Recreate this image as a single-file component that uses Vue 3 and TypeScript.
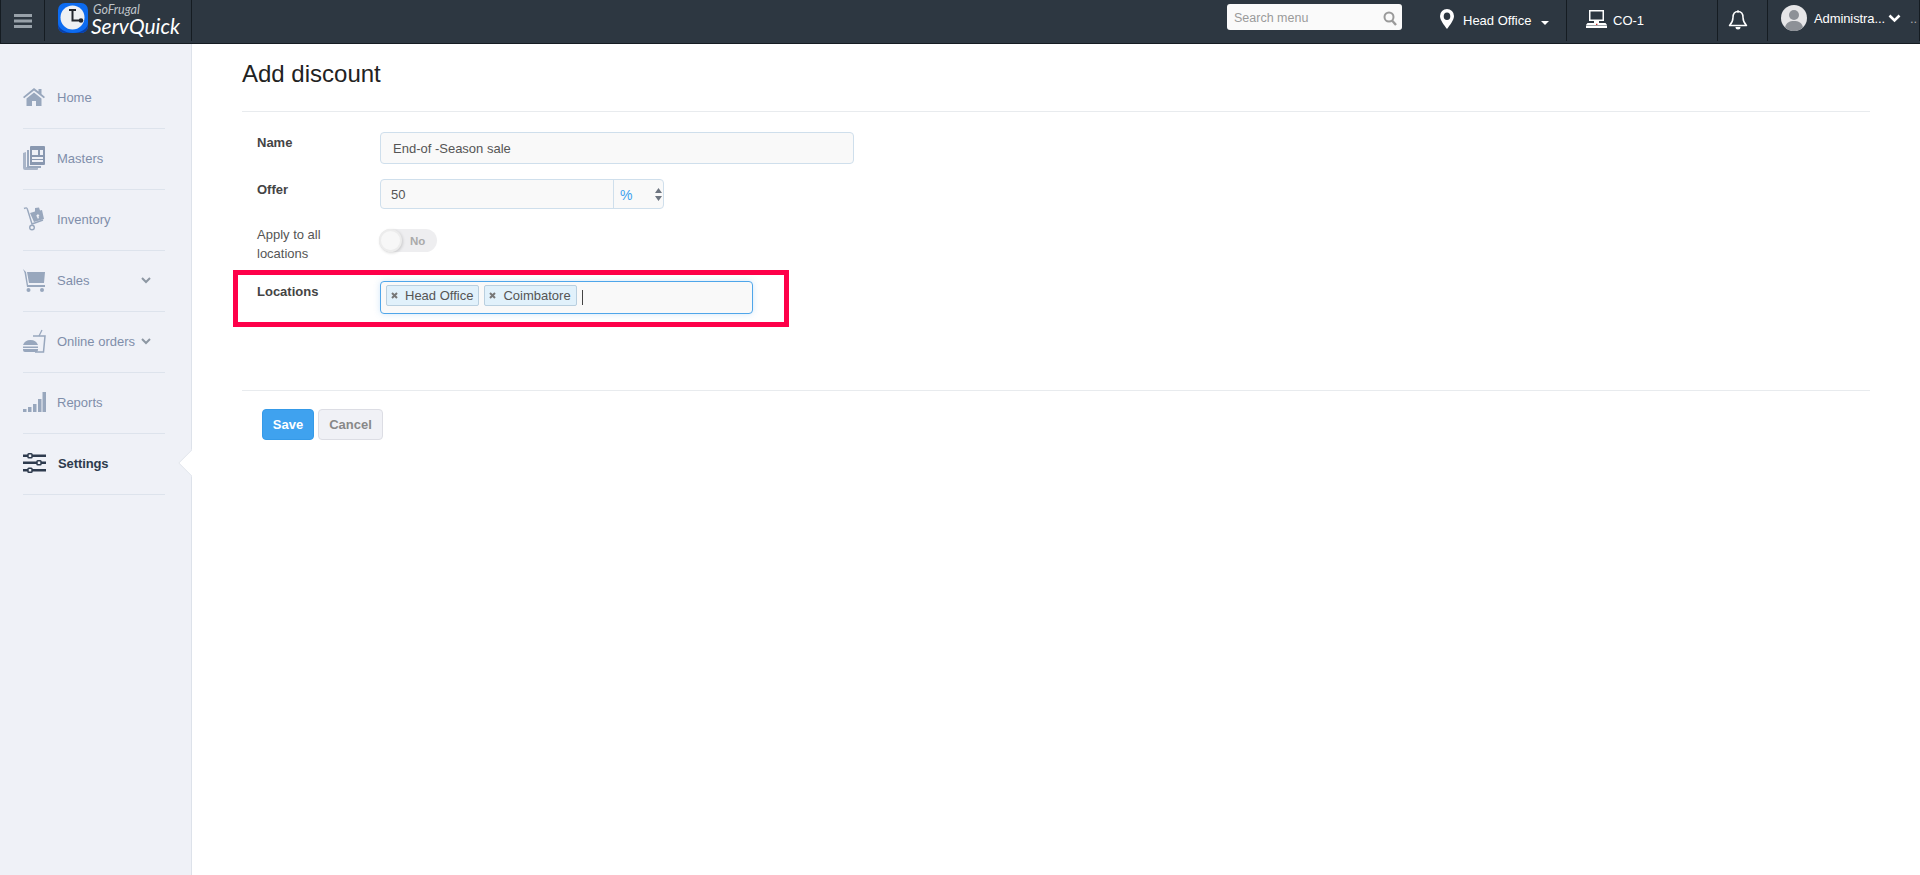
<script setup lang="ts">
interface NavItem { label: string; icon: string; chevron?: boolean; active?: boolean }
const nav: NavItem[] = [
  { label: 'Home', icon: 'home' },
  { label: 'Masters', icon: 'masters' },
  { label: 'Inventory', icon: 'inventory' },
  { label: 'Sales', icon: 'sales', chevron: true },
  { label: 'Online orders', icon: 'online', chevron: true },
  { label: 'Reports', icon: 'reports' },
  { label: 'Settings', icon: 'settings', active: true },
]
const tags = ['Head Office', 'Coimbatore']
</script>

<template>
  <div class="page">
    <header class="topbar">
      <div class="tb-cell burger-cell">
        <svg width="18" height="14" viewBox="0 0 18 14"><path d="M0 0h18v3H0zM0 5.500h18v3H0zM0 11h18v3H0z" fill="#98a1a9"/></svg>
      </div>
      <div class="tb-cell logo-cell">
        <svg class="logo-icon" width="30" height="30" viewBox="0 0 30 30">
          <rect width="30" height="30" rx="7" fill="#0c6bf0"/>
          <path d="M0 20v3a7 7 0 0 0 7 7h16a7 7 0 0 0 7-7v-3a15 10 0 0 1-30 0z" fill="#0a3fa8"/>
          <circle cx="14.500" cy="14.500" r="12" fill="#eef0f3"/>
          <path d="M11 6h7v2h-2.500v8.500H23v2h-9.500V8H11z" fill="#23272e"/>
          <circle cx="23" cy="17.500" r="2.300" fill="#23272e"/>
        </svg>
        <div class="logo-text">
          <span class="logo-top">GoFrugal</span>
          <span class="logo-main">ServQuick</span>
        </div>
      </div>
      <div class="tb-spacer"></div>
      <div class="search">
        <span>Search menu</span>
        <svg width="14" height="15" viewBox="0 0 14 15"><circle cx="6" cy="6" r="4.500" fill="none" stroke="#9a9a9a" stroke-width="2"/><path d="M9 9.500l4 4.500" stroke="#9a9a9a" stroke-width="2.400"/></svg>
      </div>
      <div class="tb-cell loc-cell">
        <svg width="14" height="20" viewBox="0 0 14 20"><path fill-rule="evenodd" d="M7 0a7 7 0 0 1 7 7c0 4-4 9-7 13-3-4-7-9-7-13a7 7 0 0 1 7-7zm0 3.500a3.300 3.800 0 1 0 0 7.600 3.300 3.800 0 0 0 0-7.600z" fill="#fff"/></svg>
        <span>Head Office</span>
        <i class="caret"></i>
      </div>
      <div class="tb-cell co-cell">
        <svg width="21" height="18" viewBox="0 0 21 18">
          <path fill-rule="evenodd" d="M3 0h15v11H3zM4.500 1.500v8h12v-8z" fill="#fff"/>
          <path d="M8 11h5v2H8z" fill="#fff"/>
          <path d="M1.500 13h18l1.500 2v3H0v-3z" fill="#fff"/>
          <path d="M0 15.400h21v.6H0z" fill="#5b6670"/>
          <path d="M10 13.800h1.400v1.200H10z" fill="#c8322f"/>
        </svg>
        <span>CO-1</span>
      </div>
      <div class="tb-cell bell-cell">
        <svg width="20" height="21" viewBox="0 0 20 21"><path d="M10 1.500c-3.500 0-5 2.500-5 6 0 4-1.500 6-3.500 8h17c-2-2-3.500-4-3.500-8 0-3.500-1.500-6-5-6z" fill="none" stroke="#fff" stroke-width="1.500" stroke-linejoin="round"/><path d="M7.500 17h5a2.500 2.500 0 0 1-5 0zM9 .5h2v2H9z" fill="#fff"/></svg>
      </div>
      <div class="tb-cell user-cell">
        <svg width="26" height="26" viewBox="0 0 26 26"><circle cx="13" cy="13" r="13" fill="#e6e6e8"/><circle cx="13" cy="10" r="5" fill="#8d9197"/><path d="M4 22.500c1-5 4.500-6.500 9-6.500s8 1.500 9 6.500a13 13 0 0 1-18 0z" fill="#8d9197"/></svg>
        <span>Administra...</span>
        <svg width="13" height="9" viewBox="0 0 13 9"><path d="M1.500 1.500l5 5 5-5" fill="none" stroke="#fff" stroke-width="2.600"/></svg>
        <span class="dots">..</span>
      </div>
    </header>

    <div class="body">
      <aside class="sidebar">
        <nav>
          <a v-for="item in nav" :key="item.label" class="nav-item" :class="{ active: item.active }">
            <span class="nav-icon">
              <svg v-if="item.icon === 'home'" width="22" height="18" viewBox="0 0 22 18"><path d="M11 0l4.500 3.600V1h3v5l3.500 3-1.200 1.300L11 2.600 1.200 10.300 0 9z" fill="#98a7bd"/><path d="M3.500 10.500L11 4.600l7.500 5.900V18H13v-5H9v5H3.500z" fill="#98a7bd"/></svg>
              <svg v-else-if="item.icon === 'masters'" width="22" height="24" viewBox="0 0 22 24"><path d="M0 7l3-1v15h12v2a1 1 0 0 1-1 1H2a2 2 0 0 1-2-2z" fill="#a9b5c8"/><path d="M4 4h2v16h12v2H5a1 1 0 0 1-1-1z" fill="#98a7bd"/><path fill-rule="evenodd" d="M7 1a1 1 0 0 1 1-1h13a1 1 0 0 1 1 1v17a1 1 0 0 1-1 1H7zm2 3v5h6V4zm8 0v5h3V4zM9 11v2h11v-2zm0 3v2h11v-2z" fill="#8998b0"/></svg>
              <svg v-else-if="item.icon === 'inventory'" width="22" height="24" viewBox="0 0 22 24"><path d="M1 1.500c2-1 3-1 3.500 1L9 17l11-4" fill="none" stroke="#98a7bd" stroke-width="1.400"/><path d="M7 6l5-1.500V1l4-.5 1 3 2-.5 2 9-10 3z" fill="#98a7bd"/><path d="M13 9l2-2 1.500 2-1 .2.500 2-1.500.4-.5-2z" fill="#eff1f7"/><circle cx="9" cy="20.500" r="2.300" fill="none" stroke="#98a7bd" stroke-width="1.400"/></svg>
              <svg v-else-if="item.icon === 'sales'" width="22" height="23" viewBox="0 0 22 23"><path d="M0 0l3 3 2 13h17v2H4L1.500 3.500z" fill="#98a7bd"/><path d="M4 3h18l-1 11H6z" fill="#98a7bd"/><circle cx="5.500" cy="21" r="2" fill="#98a7bd"/><circle cx="19" cy="21" r="2" fill="#98a7bd"/></svg>
              <svg v-else-if="item.icon === 'online'" width="23" height="24" viewBox="0 0 23 24"><path d="M10 7h12l-1.500 16H12" fill="none" stroke="#98a7bd" stroke-width="1.500"/><path d="M16 7l3-6" stroke="#98a7bd" stroke-width="1.200"/><path d="M0 16a8 7.500 0 0 1 15 0zM0 17.500h15V19H0zM0 20h15v1a2 2 0 0 1-2 2H2a2 2 0 0 1-2-2z" fill="#98a7bd"/></svg>
              <svg v-else-if="item.icon === 'reports'" width="23" height="20" viewBox="0 0 23 20"><path d="M0 17h3.500v3H0zM5 15h3.500v5H5zM10 12h3.500v8H10zM15 7h3.500v13H15zM19.500 0H23v20h-3.500z" fill="#98a7bd"/></svg>
              <svg v-else width="23" height="20" viewBox="0 0 23 20"><g fill="#2e3b4e"><path d="M0 1.500h23v2.400H0zM0 8.500h23v2.400H0zM0 16h23v2.400H0z"/></g><g fill="#eff1f7" stroke="#2e3b4e" stroke-width="1.500"><rect x="5" y=".8" width="4" height="4" rx=".8"/><rect x="14" y="7.800" width="4" height="4" rx=".8"/><rect x="5" y="15.200" width="4" height="4" rx=".8"/></g></svg>
            </span>
            <span class="nav-label">{{ item.label }}</span>
            <svg v-if="item.chevron" class="chev" width="10" height="7" viewBox="0 0 10 7"><path d="M1 1l4 4 4-4" fill="none" stroke="#8d97a3" stroke-width="2"/></svg>
          </a>
        </nav>
        <i class="notch"></i>
      </aside>

      <main class="main">
        <h1>Add discount</h1>
        <form class="form" @submit.prevent>
          <div class="row row-name">
            <label class="lbl">Name</label>
            <div class="input input-name">End-of -Season sale</div>
          </div>
          <div class="row row-offer">
            <label class="lbl">Offer</label>
            <div class="input input-offer">
              <span class="offer-val">50</span>
              <span class="offer-unit">%
                <svg width="7" height="13" viewBox="0 0 7 13"><path d="M3.500 0L7 5H0zM0 8h7l-3.500 5z" fill="#6e7580"/></svg>
              </span>
            </div>
          </div>
          <div class="row row-apply">
            <label class="lbl lbl-plain">Apply to all<br />locations</label>
            <div class="toggle"><i class="knob"></i><span>No</span></div>
          </div>
          <div class="row row-loc">
            <label class="lbl">Locations</label>
            <div class="input input-loc">
              <span v-for="t in tags" :key="t" class="tag">
                <svg width="7" height="7" viewBox="0 0 7 7"><path d="M1 1l5 5M6 1L1 6" stroke="#777" stroke-width="2"/></svg>
                {{ t }}
              </span>
              <i class="cursor"></i>
            </div>
            <div class="annotation"></div>
          </div>
        </form>
        <div class="actions">
          <button type="button" class="btn save">Save</button>
          <button type="button" class="btn cancel">Cancel</button>
        </div>
      </main>
    </div>
  </div>
</template>

<style>
html, body { margin: 0; background: #fff; overflow: hidden; }
</style>

<style scoped>
.page { width: 1920px; height: 875px; display: flex; flex-direction: column; font-family: "Liberation Sans", Arial, sans-serif; font-size: 13px; color: #555; }
.topbar { height: 43px; flex: none; display: flex; align-items: stretch; background: #2d3741; border-bottom: 1px solid #151c22; border-left: 1px solid #151c22; color: #fff; }
.tb-cell { display: flex; align-items: center; height: 41px; box-sizing: border-box; }
.burger-cell { width: 44px; border-right: 1px solid #151c22; padding-left: 13px; }
.logo-cell { width: 147px; border-right: 1px solid #151c22; padding-left: 13px; gap: 3px; }
.logo-icon { flex: none; margin-top: 3px; align-self: flex-start; }
.logo-text { display: flex; flex-direction: column; font-family: Lato, sans-serif; font-style: italic; line-height: 1; margin-top: -3px; }
.logo-top { font-size: 12.500px; color: #bfc4c9; margin-left: 2px; line-height: 13px; }
.logo-main { font-size: 21px; font-weight: 400; color: #fff; line-height: 20px; }
.tb-spacer { flex: 1; }
.search { width: 175px; height: 26px; margin-top: 4px; background: #fafafa; border-radius: 3px; display: flex; align-items: center; justify-content: space-between; padding: 2px 5px 0 7px; box-sizing: border-box; color: #9a9a9a; font-size: 12.500px; }
.loc-cell { width: 165px; padding-left: 38px; box-sizing: border-box; gap: 9px; font-size: 13px; border-right: 1px solid #151c22; }
.loc-cell svg { margin-top: -4px; }
.caret { width: 0; height: 0; border: 4px solid transparent; border-top-color: #fff; border-bottom: 0; margin-left: 1px; margin-top: 4px; }
.co-cell { width: 151px; padding-left: 19px; gap: 6px; border-right: 1px solid #151c22; }
.co-cell svg { margin-top: -4px; }
.co-cell span { margin-top: -1px; }
.bell-cell { width: 50px; padding-left: 10px; border-right: 1px solid #151c22; }
.user-cell { width: 152px; padding-left: 13px; gap: 7px; border-right: 1px solid #151c22; margin-right: 0; }
.user-cell > svg:first-child { margin-top: -5px; }
.user-cell > span { margin-top: -5px; letter-spacing: -0.1px; }
.user-cell > svg:nth-of-type(2) { margin-left: -4px; margin-top: -5px; }
.dots { color: #aaa; margin-left: 2px; }
.body { flex: 1; display: flex; min-height: 0; }
.sidebar { width: 192px; flex: none; box-sizing: border-box; background: #eff1f7; border-right: 1px solid #dde2ea; padding: 24px 26px 0 23px; position: relative; }
.nav-item { height: 60px; display: flex; align-items: center; border-bottom: 1px solid #dde3ec; color: #7f8eaa; font-size: 13px; position: relative; }
.nav-icon { width: 34px; flex: none; display: flex; align-items: center; margin-top: -2px; }
.nav-label { margin-top: -2px; }
.nav-item.active { color: #2d3b4d; font-weight: 700; }
.nav-item.active .nav-label { margin-left: 1px; letter-spacing: -0.1px; }
.chev { position: absolute; left: 118px; top: 26px; }
.notch { position: absolute; right: -1px; top: 409px; width: 20px; height: 20px; background: #fff; transform: translateX(10px) rotate(45deg); border: 1px solid #dde2ea; box-sizing: border-box; clip-path: polygon(0 0, 0 100%, 100% 100%); }
.main { flex: 1; padding: 0 50px; min-width: 0; }
h1 { margin: 0; height: 68px; box-sizing: border-box; border-bottom: 1px solid #e8ebee; font-weight: 400; font-size: 24px; line-height: 60px; color: #222; }
.form { padding: 20px 0 0 15px; height: 279px; box-sizing: border-box; border-bottom: 1px solid #e8ebee; }
.row { display: flex; align-items: flex-start; position: relative; }
.lbl { width: 123px; flex: none; font-weight: 700; color: #444; font-size: 13px; line-height: 20px; margin-top: 1px; }
.lbl-plain { font-weight: 400; line-height: 19px; color: #555; margin-top: 0; }
.input { box-sizing: border-box; background: #f9f9f9; border: 1px solid #cfdfec; border-radius: 4px; display: flex; align-items: center; color: #555; font-size: 13px; }
.input-name { width: 474px; height: 32px; padding-left: 12px; }
.row-offer { margin-top: 15px; }
.input-offer { width: 284px; height: 30px; }
.offer-val { width: 233px; box-sizing: border-box; padding-left: 10px; height: 100%; line-height: 30px; border-right: 1px solid #cfdfec; }
.offer-unit { flex: 1; display: flex; align-items: center; justify-content: space-between; padding: 2px 1px 0 6px; color: #3ea1ee; font-size: 14px; }
.offer-unit svg { margin-top: -2px; }
.row-apply { margin-top: 16px; height: 41px; }
.toggle { width: 58px; height: 23px; margin-top: 4px; border-radius: 12px; background: #eeeef0; display: flex; align-items: center; position: relative; box-sizing: border-box; margin-left: -1px; }
.toggle span { font-size: 11.500px; font-weight: 700; color: #aaa; margin-left: 31px; }
.knob { position: absolute; left: 0; top: 0; width: 23px; height: 23px; border-radius: 50%; background: #f7f7f7; border: 2px solid #ececec; box-sizing: border-box; box-shadow: 1px 1px 3px rgba(0,0,0,.15); }
.row-loc { margin-top: 15px; }
.input-loc { width: 373px; height: 33px; border-color: #4fa6ea; padding: 3px 0 0 5px; gap: 5px; box-shadow: 0 0 6px rgba(80,160,230,.25); align-items: flex-start; }
.tag { height: 21px; box-sizing: border-box; padding: 0 5px 0 4px; background: #e1f1fb; border: 1px solid #b9cfdf; border-radius: 2px; display: inline-flex; align-items: center; gap: 7px; color: #555; line-height: 1; white-space: nowrap; }
.cursor { width: 1px; height: 15px; background: #444; margin-top: 5px; }
.annotation { position: absolute; left: -24px; top: -11px; width: 556px; height: 57px; box-sizing: border-box; border: 5px solid #fe0049; pointer-events: none; }
.actions { padding: 18px 0 0 20px; display: flex; gap: 4px; }
.btn { height: 31px; box-sizing: border-box; border-radius: 4px; font: 700 13px "Liberation Sans", Arial, sans-serif; padding: 0; }
.save { width: 52px; background: #3fa2ef; border: 1px solid #359ae8; color: #fff; }
.cancel { width: 65px; background: #f0f1f6; border: 1px solid #dcdde4; color: #888; }
</style>
